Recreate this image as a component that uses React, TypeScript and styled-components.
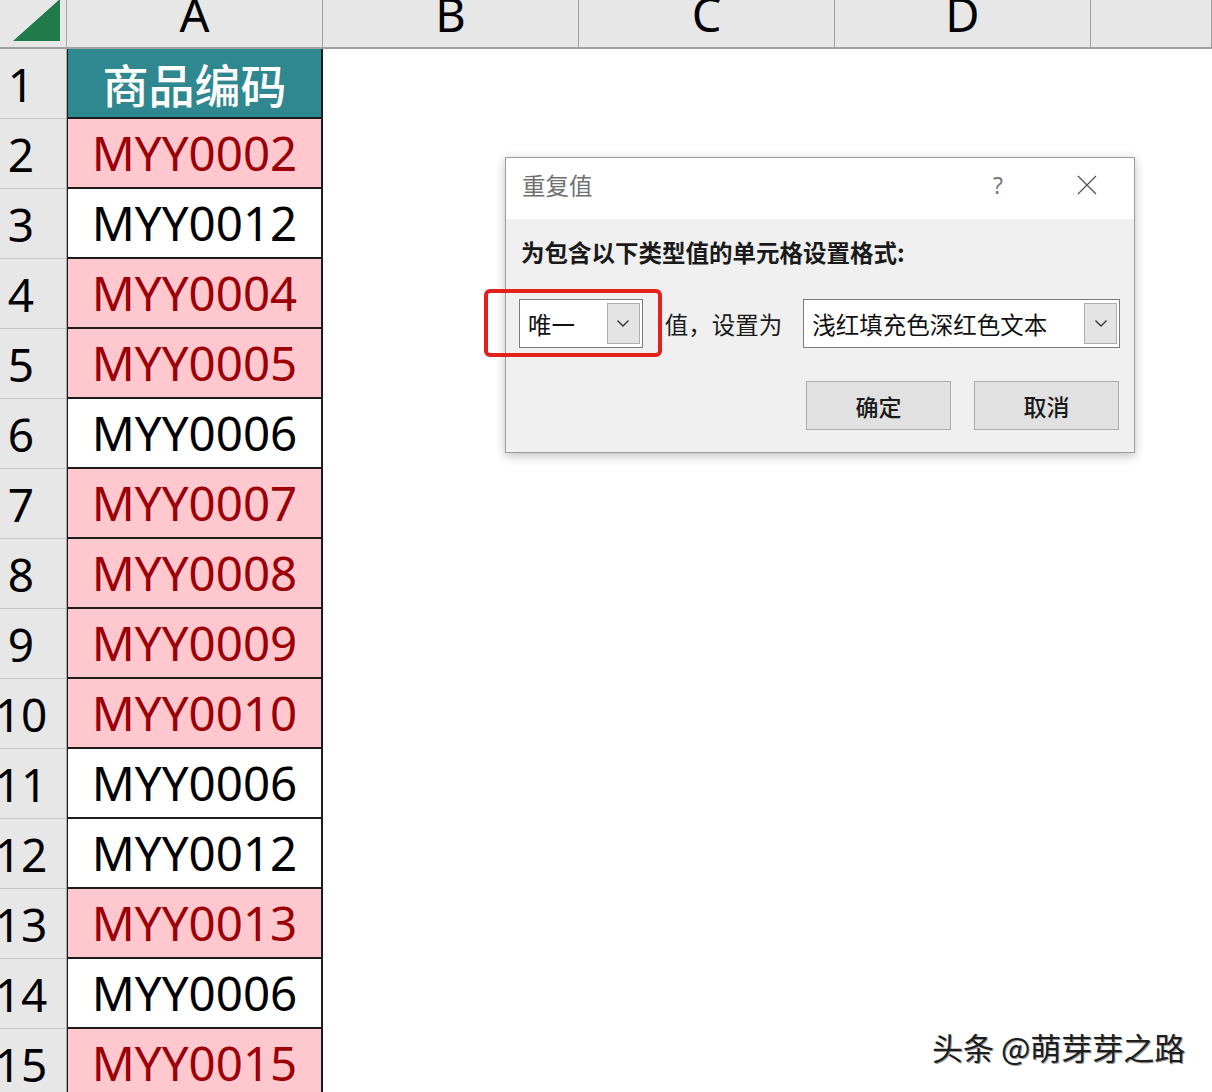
import styled, { createGlobalStyle } from "styled-components"

const GlobalStyle = createGlobalStyle`
  html, body {
    margin: 0;
    padding: 0;
    background: #fff;
    overflow: hidden;
  }
  body {
    font-family: "Noto Sans", "Noto Sans CJK SC", sans-serif;
  }
`

const Page = styled.div`
  position: relative;
  width: 1212px;
  height: 1092px;
  overflow: hidden;
  background: #fff;
`

const Sheet = styled.div`
  display: grid;
  grid-template-columns: 67px 256px 256px 256px 256px 1fr;
  grid-template-rows: 49px repeat(15, 70px);
`

const Corner = styled.div`
  box-sizing: border-box;
  background: #e7e7e7;
  border-right: 1px solid #a9a9a9;
  border-bottom: 2px solid #a0a0a0;
  display: flex;
  align-items: flex-end;
  justify-content: flex-end;
  padding: 0 6px 6px 0;
`

const ColHeader = styled.div`
  box-sizing: border-box;
  background: #e7e7e7;
  border-right: 1px solid #9f9f9f;
  border-bottom: 2px solid #a0a0a0;
  display: flex;
  justify-content: center;
  align-items: flex-start;
  overflow: hidden;
  font-family: "Noto Sans", sans-serif;
  font-size: 47px;
  line-height: 1;
  color: #000;
`

const ColLetter = styled.span`
  margin-top: -9px;
`

const RowHeader = styled.div`
  box-sizing: border-box;
  background: #e7e7e7;
  border-right: 1px solid #a9a9a9;
  border-bottom: 1px solid #c4c4c4;
  display: flex;
  justify-content: center;
  align-items: center;
  padding-right: 24px;
  overflow: hidden;
  font-family: "Noto Sans", sans-serif;
  font-size: 46px;
  line-height: 1;
  color: #000;
  white-space: nowrap;
`

const Cell = styled.div<{ $kind: "head" | "dup" | "plain" }>`
  box-sizing: border-box;
  border-left: 1px solid #1c1c1c;
  border-right: 2px solid #1c1c1c;
  border-bottom: 2px solid #1c1c1c;
  display: flex;
  justify-content: center;
  align-items: center;
  white-space: nowrap;
  line-height: 1;
  background: ${(p) => (p.$kind === "head" ? "#2f8790" : p.$kind === "dup" ? "#ffc7ce" : "#fff")};
  color: ${(p) => (p.$kind === "head" ? "#fff" : p.$kind === "dup" ? "#9c0006" : "#000")};
  font-family: ${(p) =>
    p.$kind === "head" ? '"Noto Sans CJK SC", sans-serif' : '"Noto Sans", sans-serif'};
  font-size: ${(p) => (p.$kind === "head" ? "46px" : "47.5px")};
  font-weight: ${(p) => (p.$kind === "head" ? 500 : 400)};
`

const Blank = styled.div`
  grid-column: 3 / -1;
  background: #fff;
`

const Dialog = styled.div`
  position: absolute;
  left: 505px;
  top: 157px;
  width: 630px;
  box-sizing: border-box;
  border: 1px solid #9c9c9c;
  background: #f0f0f0;
  box-shadow: 0 3px 10px rgba(0, 0, 0, 0.25);
  font-family: "Noto Sans CJK SC", "Noto Sans", sans-serif;
`

const TitleBar = styled.div`
  box-sizing: border-box;
  height: 61px;
  background: #fff;
  display: flex;
  align-items: center;
  justify-content: space-between;
  padding: 0 37px 7px 16px;
`

const Title = styled.span`
  font-size: 23.5px;
  color: #707070;
`

const TitleTools = styled.div`
  display: flex;
  align-items: center;
  gap: 74px;
`

const Help = styled.span`
  font-family: "Noto Sans", sans-serif;
  font-size: 23px;
  color: #7a7a7a;
`

const Body = styled.div`
  padding: 21px 14px 22px 13px;
  display: flex;
  flex-direction: column;
`

const Label = styled.div`
  font-size: 23.5px;
  font-weight: 700;
  line-height: 24px;
  color: #1a1a1a;
  margin-left: 2px;
  white-space: nowrap;
`

const FieldRow = styled.div`
  display: flex;
  align-items: center;
  margin-top: 35px;
`

const Combo = styled.div<{ $width: number }>`
  position: relative;
  box-sizing: border-box;
  width: ${(p) => p.$width}px;
  height: 49px;
  background: #fff;
  border: 1px solid #7a7a7a;
  display: flex;
  align-items: center;
  justify-content: space-between;
  padding: 3px 2px 3px 8px;
  font-size: 23.5px;
  color: #111;
  white-space: nowrap;
`

const DropButton = styled.div`
  box-sizing: border-box;
  flex: none;
  width: 33px;
  height: 41px;
  background: #e4e4e4;
  border: 1px solid #adadad;
  display: flex;
  align-items: center;
  justify-content: center;
`

const Highlight = styled.div`
  position: absolute;
  left: -36px;
  top: -11px;
  right: -20px;
  bottom: -10px;
  border: 4px solid #e3201c;
  border-radius: 6px;
  pointer-events: none;
`

const Between = styled.span`
  font-size: 23.5px;
  color: #1a1a1a;
  margin: 0 21px 0 22px;
  white-space: nowrap;
`

const ButtonRow = styled.div`
  display: flex;
  justify-content: flex-end;
  gap: 23px;
  margin-top: 33px;
  padding-right: 1px;
`

const Button = styled.div`
  box-sizing: border-box;
  width: 145px;
  height: 49px;
  background: #e1e1e1;
  border: 1px solid #adadad;
  display: flex;
  align-items: center;
  justify-content: center;
  font-size: 23px;
  font-weight: 500;
  color: #1a1a1a;
`

const Watermark = styled.div`
  position: absolute;
  left: 932px;
  top: 1029px;
  font-family: "Noto Sans CJK SC", sans-serif;
  font-size: 31px;
  line-height: 36px;
  color: #1e1e1e;
  text-shadow: 1px 1px 0 #9a9a9a, -1px -1px 0 #ffffff;
  white-space: nowrap;
`

const rows: { code: string; dup: boolean }[] = [
  { code: "MYY0002", dup: true },
  { code: "MYY0012", dup: false },
  { code: "MYY0004", dup: true },
  { code: "MYY0005", dup: true },
  { code: "MYY0006", dup: false },
  { code: "MYY0007", dup: true },
  { code: "MYY0008", dup: true },
  { code: "MYY0009", dup: true },
  { code: "MYY0010", dup: true },
  { code: "MYY0006", dup: false },
  { code: "MYY0012", dup: false },
  { code: "MYY0013", dup: true },
  { code: "MYY0006", dup: false },
  { code: "MYY0015", dup: true },
]

function Chevron() {
  return (
    <svg width="14" height="9" viewBox="0 0 14 9">
      <path d="M1.5 1.5 L7 7 L12.5 1.5" fill="none" stroke="#333" strokeWidth="1.4" />
    </svg>
  )
}

export default function App() {
  return (
    <Page>
      <GlobalStyle />
      <Sheet>
        <Corner>
          <svg width="47" height="42" viewBox="0 0 47 42">
            <polygon points="0,42 47,42 47,0" fill="#217a4a" />
          </svg>
        </Corner>
        {["A", "B", "C", "D", ""].map((c, i) => (
          <ColHeader key={i}>
            <ColLetter>{c}</ColLetter>
          </ColHeader>
        ))}

        <RowHeader>1</RowHeader>
        <Cell $kind="head">商品编码</Cell>
        <Blank />

        {rows.map((r, i) => (
          <>
            <RowHeader key={`h${i}`}>{i + 2}</RowHeader>
            <Cell key={`c${i}`} $kind={r.dup ? "dup" : "plain"}>
              {r.code}
            </Cell>
            <Blank key={`b${i}`} />
          </>
        ))}
      </Sheet>

      <Dialog>
        <TitleBar>
          <Title>重复值</Title>
          <TitleTools>
            <Help>?</Help>
            <svg width="20" height="20" viewBox="0 0 20 20">
              <path d="M1 1 L19 19 M19 1 L1 19" stroke="#555" strokeWidth="1.3" />
            </svg>
          </TitleTools>
        </TitleBar>
        <Body>
          <Label>为包含以下类型值的单元格设置格式:</Label>
          <FieldRow>
            <Combo $width={124}>
              <span>唯一</span>
              <DropButton>
                <Chevron />
              </DropButton>
              <Highlight />
            </Combo>
            <Between>值，设置为</Between>
            <Combo $width={317}>
              <span>浅红填充色深红色文本</span>
              <DropButton>
                <Chevron />
              </DropButton>
            </Combo>
          </FieldRow>
          <ButtonRow>
            <Button>确定</Button>
            <Button>取消</Button>
          </ButtonRow>
        </Body>
      </Dialog>

      <Watermark>头条 @萌芽芽之路</Watermark>
    </Page>
  )
}
